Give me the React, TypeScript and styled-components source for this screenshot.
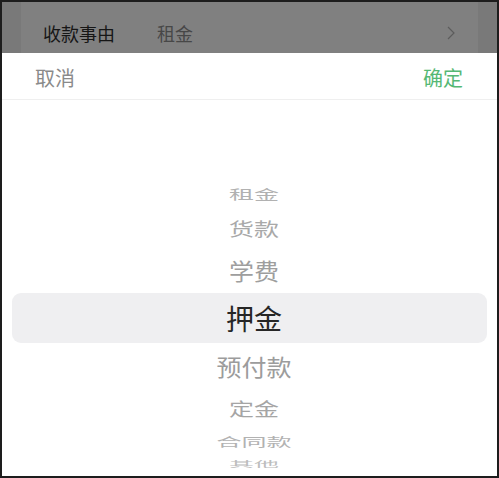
import React from "react";
import styled, { createGlobalStyle } from "styled-components";

const GlobalStyle = createGlobalStyle`
  html, body { margin: 0; padding: 0; background: #ffffff; }
  body { font-family: "Noto Sans CJK SC", "Noto Sans", sans-serif; }
  * { box-sizing: border-box; }
`;

const Frame = styled.div`
  width: 499px;
  height: 478px;
  border: 2px solid #1d1d1d;
  overflow: hidden;
  display: flex;
  flex-direction: column;
  background: #ffffff;
`;

const Backdrop = styled.div`
  height: 51px;
  flex: none;
  background: #797979;
  padding: 0 19px;
  display: flex;
`;

const FormRow = styled.div`
  flex: 1;
  display: flex;
  align-items: center;
  padding: 11px 23px 0 22px;
  background: #808080;
`;

const FieldLabel = styled.span`
  width: 114px;
  font-size: 18px;
  color: #161616;
  line-height: 1;
`;

const FieldValue = styled.span`
  flex: 1;
  font-size: 18px;
  color: #474747;
  line-height: 1;
`;

const Chevron = styled.svg`
  width: 8px;
  height: 14px;
  display: block;
`;

const Sheet = styled.div`
  flex: 1;
  display: flex;
  flex-direction: column;
  background: #ffffff;
`;

const SheetHeader = styled.div`
  height: 47px;
  flex: none;
  display: flex;
  align-items: center;
  justify-content: space-between;
  padding: 3px 34px 0 33px;
  border-bottom: 1px solid #efefef;
`;

const HeaderButton = styled.span<{ $primary?: boolean }>`
  font-size: 20px;
  line-height: 1;
  color: ${(p) => (p.$primary ? "#55b874" : "#8a8a8a")};
`;

const Wheel = styled.div`
  flex: 1;
  display: flex;
  flex-direction: column;
  padding-top: 76px;
`;

const WheelRow = styled.div<{ $h: number; $selected?: boolean }>`
  height: ${(p) => p.$h}px;
  flex: none;
  display: flex;
  align-items: center;
  justify-content: center;
  padding-left: ${(p) => (p.$selected ? "9px" : "9px")};
  margin: 0 ${(p) => (p.$selected ? "10px" : "0")};
  background: ${(p) => (p.$selected ? "#efeff1" : "transparent")};
  border-radius: ${(p) => (p.$selected ? "9px" : "0")};
`;

const WheelText = styled.span<{ $scale: number; $color: string; $selected?: boolean }>`
  display: block;
  font-size: ${(p) => (p.$selected ? "28px" : "25px")};
  line-height: 1;
  color: ${(p) => p.$color};
  transform: scaleY(${(p) => p.$scale});
  white-space: nowrap;
`;

type Item = { label: string; h: number; scale: number; color: string; selected?: boolean };

const items: Item[] = [
  { label: "租金", h: 34, scale: 0.52, color: "#b1b1b1" },
  { label: "货款", h: 37, scale: 0.74, color: "#a9a9a9" },
  { label: "学费", h: 46, scale: 0.92, color: "#9e9e9e" },
  { label: "押金", h: 50, scale: 1, color: "#262626", selected: true },
  { label: "预付款", h: 46, scale: 0.92, color: "#9c9c9c" },
  { label: "定金", h: 39, scale: 0.72, color: "#a5a5a5" },
  { label: "合同款", h: 26, scale: 0.5, color: "#b2b2b2" },
  { label: "其他", h: 18, scale: 0.32, color: "#bdbdbd" },
];

export default function App() {
  return (
    <>
      <GlobalStyle />
      <Frame>
        <Backdrop>
          <FormRow>
            <FieldLabel>收款事由</FieldLabel>
            <FieldValue>租金</FieldValue>
            <Chevron viewBox="0 0 8 14">
              <path d="M1 1 L7 7 L1 13" fill="none" stroke="#5c5c5c" strokeWidth="1.2" />
            </Chevron>
          </FormRow>
        </Backdrop>
        <Sheet>
          <SheetHeader>
            <HeaderButton>取消</HeaderButton>
            <HeaderButton $primary>确定</HeaderButton>
          </SheetHeader>
          <Wheel>
            {items.map((it) => (
              <WheelRow key={it.label} $h={it.h} $selected={it.selected}>
                <WheelText $scale={it.scale} $color={it.color} $selected={it.selected}>
                  {it.label}
                </WheelText>
              </WheelRow>
            ))}
          </Wheel>
        </Sheet>
      </Frame>
    </>
  );
}
